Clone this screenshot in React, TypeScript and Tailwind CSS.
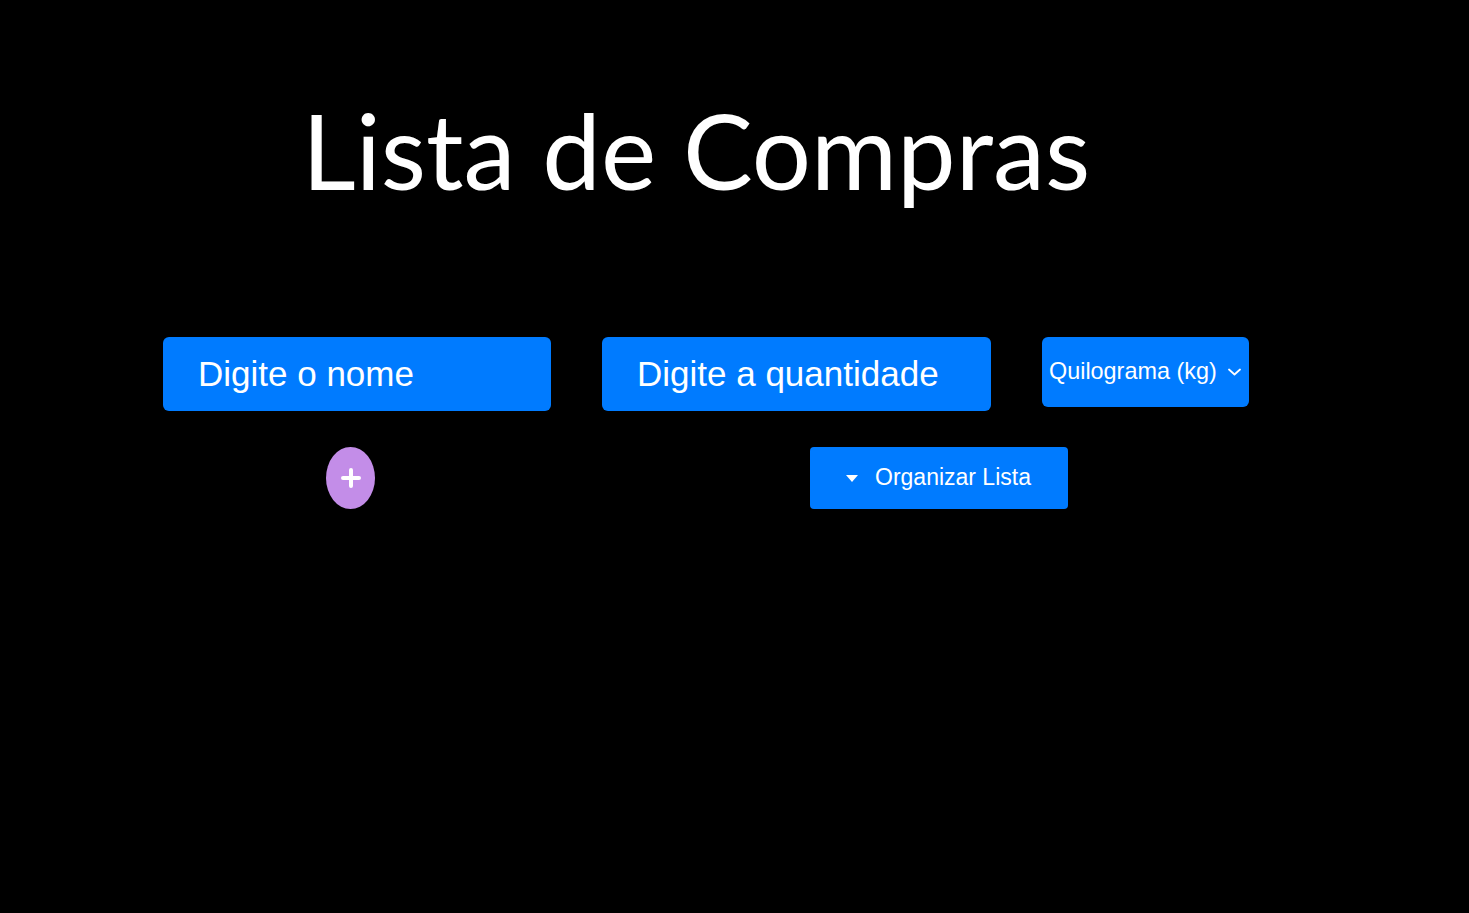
import React from "react";

export default function App() {
  return (
    <div className="min-h-[913px] w-full bg-black text-white" style={{ fontFamily: '"Liberation Sans", Arial, sans-serif' }}>
      <div className="pt-[87px] pl-[302px]">
        <h1 className="text-[104.6px] leading-[1.2] font-normal text-white" style={{ fontFamily: 'Lato, "Noto Sans", sans-serif' }}>
          Lista de Compras
        </h1>
      </div>
      <div className="mt-[124px] flex items-start gap-[51px] pl-[163px]">
        <input
          className="h-[74px] w-[388px] rounded-[6px] bg-[#007bff] pl-[35px] text-[35px] text-white placeholder:text-white outline-none"
          placeholder="Digite o nome"
        />
        <input
          className="h-[74px] w-[389px] rounded-[6px] bg-[#007bff] pl-[35px] text-[35px] text-white placeholder:text-white outline-none"
          placeholder="Digite a quantidade"
        />
        <button className="flex h-[70px] w-[207px] items-center rounded-[6px] bg-[#007bff] pl-[7px] text-[23.4px] text-white">
          <span>Quilograma (kg)</span>
          <svg className="ml-[11px]" width="13" height="8" viewBox="0 0 13 8" fill="none" stroke="white" strokeWidth="1.8" strokeLinecap="round" strokeLinejoin="round">
            <path d="M1 1.5l5.5 5 5.5-5" />
          </svg>
        </button>
      </div>
      <div className="mt-[36px] flex items-start">
        <button className="ml-[326px] flex h-[62px] w-[49px] items-center justify-center rounded-[50%] bg-[#c38de8]">
          <svg width="22" height="22" viewBox="0 0 22 22" fill="none" stroke="white" strokeWidth="4" strokeLinecap="round">
            <path d="M11 3v16M3 11h16" />
          </svg>
        </button>
        <button className="ml-[435px] flex h-[62px] w-[258px] items-center rounded-[4px] bg-[#007bff] pl-[35px] text-[23px] text-white">
          <svg width="14" height="10" viewBox="0 0 14 10" fill="white">
            <path d="M1 2h12l-6 7z" />
          </svg>
          <span className="ml-[16px]">Organizar Lista</span>
        </button>
      </div>
    </div>
  );
}
